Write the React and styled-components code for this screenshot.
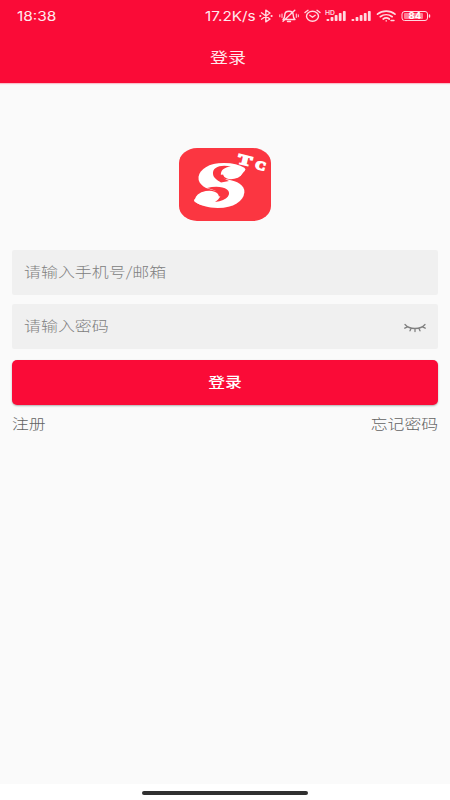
import React from 'react';
import styled, { createGlobalStyle } from 'styled-components';


const GlobalStyle = createGlobalStyle`
  body {
    margin: 0;
    background: #fafafa;
    font-family: 'Noto Sans CJK SC', sans-serif;
  }
`;

const Screen = styled.div`
  display: flex;
  flex-direction: column;
  box-sizing: border-box;
  height: 800px;
  width: 450px;
  overflow: hidden;
  background: #fafafa;
`;

const Header = styled.header`
  height: 83px;
  flex: none;
  background: #fa0b37;
  color: #ffe9ed;
  box-shadow: 0 1px 1px rgba(250, 11, 55, 0.25);
`;

const StatusBar = styled.div`
  display: flex;
  justify-content: space-between;
  align-items: center;
  height: 32px;
  padding: 0 19px 0 17px;
`;

const StatusRight = styled.div`
  display: flex;
  align-items: center;
`;

const StatusText = styled.div`
  width: ${props => props.width}px;
  font-family: Inter, sans-serif;
  font-size: 13px;
  font-weight: 400;
  line-height: 32px;
  white-space: nowrap;
  transform: scaleX(${props => props.stretch});
  transform-origin: left center;
`;

const StatusIcons = styled.svg`
  display: block;
  width: 174px;
  height: 32px;
`;

const Wide = styled.span`
  display: inline-block;
  transform: scaleX(1.2);
  transform-origin: ${props => props.origin || 'left'} center;
`;

const Title = styled.h1`
  margin: 0;
  font-size: 15px;
  font-weight: 400;
  line-height: 49px;
  text-align: center;
  padding-right: 8px;
  padding-left: 14px;
`;

const Content = styled.main`
  display: flex;
  flex: 1;
  flex-direction: column;
  padding: 65px 12px 0;
`;

const Logo = styled.svg`
  display: block;
  align-self: center;
  width: 92px;
  height: 73px;
  margin-bottom: 29px;
`;

const Field = styled.label`
  display: flex;
  align-items: center;
  justify-content: space-between;
  box-sizing: border-box;
  height: 45px;
  margin-bottom: ${props => props.gap}px;
  padding: 0 11px 0 12px;
  border-radius: 2px;
  background: #f0f0f0;
`;

const Input = styled.input`
  width: 240px;
  padding: 0 0 4px;
  border: 0;
  outline: 0;
  background: transparent;
  color: #555;
  font-family: inherit;
  font-size: 14px;
  font-weight: 300;
  transform: scaleX(1.21);
  transform-origin: left center;

  &::placeholder {
    color: #808080;
    opacity: 1;
  }
`;

const EyeIcon = styled.svg`
  width: 24px;
  height: 12px;
  margin-top: 3px;
`;

const LoginButton = styled.button`
  flex: none;
  height: 45px;
  padding: 0 0 3px;
  border: 0;
  border-radius: 5px;
  background: #fa0b37;
  box-shadow: 0 1px 2px rgba(0, 0, 0, 0.3);
  color: #fff;
  font-family: inherit;
  font-size: 14px;
  font-weight: 500;
`;

const Links = styled.div`
  display: flex;
  justify-content: space-between;
  margin-top: 8px;
  color: #626262;
  font-size: 14px;
  font-weight: 300;
  line-height: 21px;
`;

const NavBar = styled.footer`
  display: flex;
  justify-content: center;
  height: 16px;
  background: #fff;
`;

const HomeIndicator = styled.div`
  width: 166px;
  height: 4px;
  margin-top: 7px;
  border-radius: 2px;
  background: #303030;
`;

const SIGNAL_BARS = [2, 4, 6, 8, 10];

const Signal = ({ x }) => (
  <g fill="#ffd9e0" stroke="none">
    {SIGNAL_BARS.map((h, i) => (
      <rect key={h} x={x + i * 4.1} y={21 - h} width="2.8" height={h} rx="0.8" />
    ))}
  </g>
);

// bluetooth, muted bell, alarm, two signals, wifi and battery
const Icons = () => (
  <StatusIcons viewBox="257 0 174 32" fill="none" stroke="#ffd9e0" strokeWidth="1.4" strokeLinecap="round" strokeLinejoin="round">
    <path d="M261.5 12.8 270 19l-4.2 2.8V10.2L270 13l-8.5 6.2" />
    <path d="M260.2 16h.2M271.5 16h.2" strokeWidth="2" />
    <path d="M283 19.500h12c-1.600-1.500-1.800-2.500-1.800-4.500 0-5-8.400-5-8.400 0 0 2-.2 3-1.800 4.500zM287.500 21.500h3M294.800 10.200 283 21.200" />
    <path d="M282 14v3.500M279.800 14.800v2M296.300 14v3.500M298.300 14.800v2" strokeWidth="1" />
    <ellipse cx="312.5" cy="16.3" rx="6" ry="5" />
    <path d="M305 12.500l3-2.200M320 12.500l-3-2.200M309.800 15.300l2.700 2 2.700-2" />
    <text x="325" y="14.5" fill="#ffd9e0" stroke="none" fontFamily="Inter, sans-serif" fontSize="6" fontWeight="600" textLength="10" lengthAdjust="spacingAndGlyphs">HD</text>
    <Signal x={326.5} />
    <Signal x={351.5} />
    <path d="M377.500 14.200c5-4 12.500-4 17.500 0M380.300 16.700c3.500-2.600 8.400-2.600 11.900 0M383.200 19c1.800-1.300 4.300-1.300 6.100 0" strokeWidth="1.7" />
    <path d="M386.200 20.800v.2M391 20.500h3" strokeWidth="1.4" />
    <rect x="402" y="11.5" width="25.5" height="9" rx="2.5" strokeWidth="1" />
    <rect x="404" y="13" width="19" height="6" rx="1" fill="#ff7d94" stroke="none" />
    <path d="M429.500 15v2" strokeWidth="1.4" />
    <text x="408.5" y="19" fill="#fff" stroke="none" fontFamily="Inter, sans-serif" fontSize="8.5" fontWeight="700" textLength="12.5" lengthAdjust="spacingAndGlyphs">84</text>
  </StatusIcons>
);

const AppLogo = () => (
  <Logo viewBox="0 0 92 73" fontFamily="'Liberation Serif', serif" fontWeight="700" fill="#fff">
    <rect width="92" height="73" rx="18" ry="15" fill="#fb3641" />
    <text
      transform="translate(17 56.5) skewX(-5) scale(1.55 1)"
      fontFamily="Lato, sans-serif"
      fontSize="54"
      fontWeight="900"
      stroke="#fff"
      strokeWidth="5"
      strokeLinejoin="round"
    >
      S
    </text>
    <ellipse cx="54" cy="25" rx="10" ry="6" transform="rotate(-12 54 25)" />
    <ellipse cx="28" cy="50" rx="12" ry="7" transform="rotate(-10 28 50)" />
    {/* swirls that cut into the letter */}
    <g fill="#fb3641">
      <path d="M52 18.500C42 16 33 19 34 26c.5 4 4 6 8 8.500l8-1.500c-6-3-9-4.500-8-8 .7-3.500 4-5.800 10-6.500z" />
      <path d="M28 40c8-2 16-1.500 20 1.500 5 4 1 11-12 12.500 5-3.500 7-7 4-9.500-3-2-7-3-12-4.500z" />
    </g>
    <g stroke="#fff" strokeWidth="1.4">
      <text transform="translate(58 15) rotate(14) scale(1.5 1)" fontSize="14">T</text>
      <text transform="translate(75.5 20) rotate(16) scale(1.2 1)" fontSize="12">C</text>
    </g>
  </Logo>
);

const ClosedEye = () => (
  <EyeIcon viewBox="0 0 24 12" fill="none" stroke="#808080" strokeWidth="1.3" strokeLinecap="round">
    <path d="M2 2.500c4.500 5.300 15.500 5.300 20 0M4.500 4.800 1.800 6.200M8 6.400 7 8.800M12 6.800v2.700M16 6.400l1 2.400M19.500 4.800l2.700 1.400" />
  </EyeIcon>
);

class App extends React.Component {

  state = {
    account: '',
    password: '',
  };

  handleChange = (e) => {
    this.setState({ [e.target.name]: e.target.value });
  }

  render() {
    const { account, password } = this.state;

    return (
      <>
        <GlobalStyle />
        <Screen>
          <Header>
            <StatusBar>
              <StatusText width={40} stretch={1.19}>18:38</StatusText>
              <StatusRight>
                <StatusText width={52} stretch={1.18}>17.2K/s</StatusText>
                <Icons />
              </StatusRight>
            </StatusBar>
            <Title><Wide origin="center">登录</Wide></Title>
          </Header>
          <Content>
            <AppLogo />
            <Field gap={9}>
              <Input name="account" value={account} onChange={this.handleChange} placeholder="请输入手机号/邮箱" />
            </Field>
            <Field gap={11}>
              <Input name="password" type="password" value={password} onChange={this.handleChange} placeholder="请输入密码" />
              <ClosedEye />
            </Field>
            <LoginButton type="button"><Wide origin="center">登录</Wide></LoginButton>
            <Links>
              <Wide>注册</Wide>
              <Wide origin="right">忘记密码</Wide>
            </Links>
          </Content>
          <NavBar>
            <HomeIndicator />
          </NavBar>
        </Screen>
      </>
    )
  }
}

export default App;
